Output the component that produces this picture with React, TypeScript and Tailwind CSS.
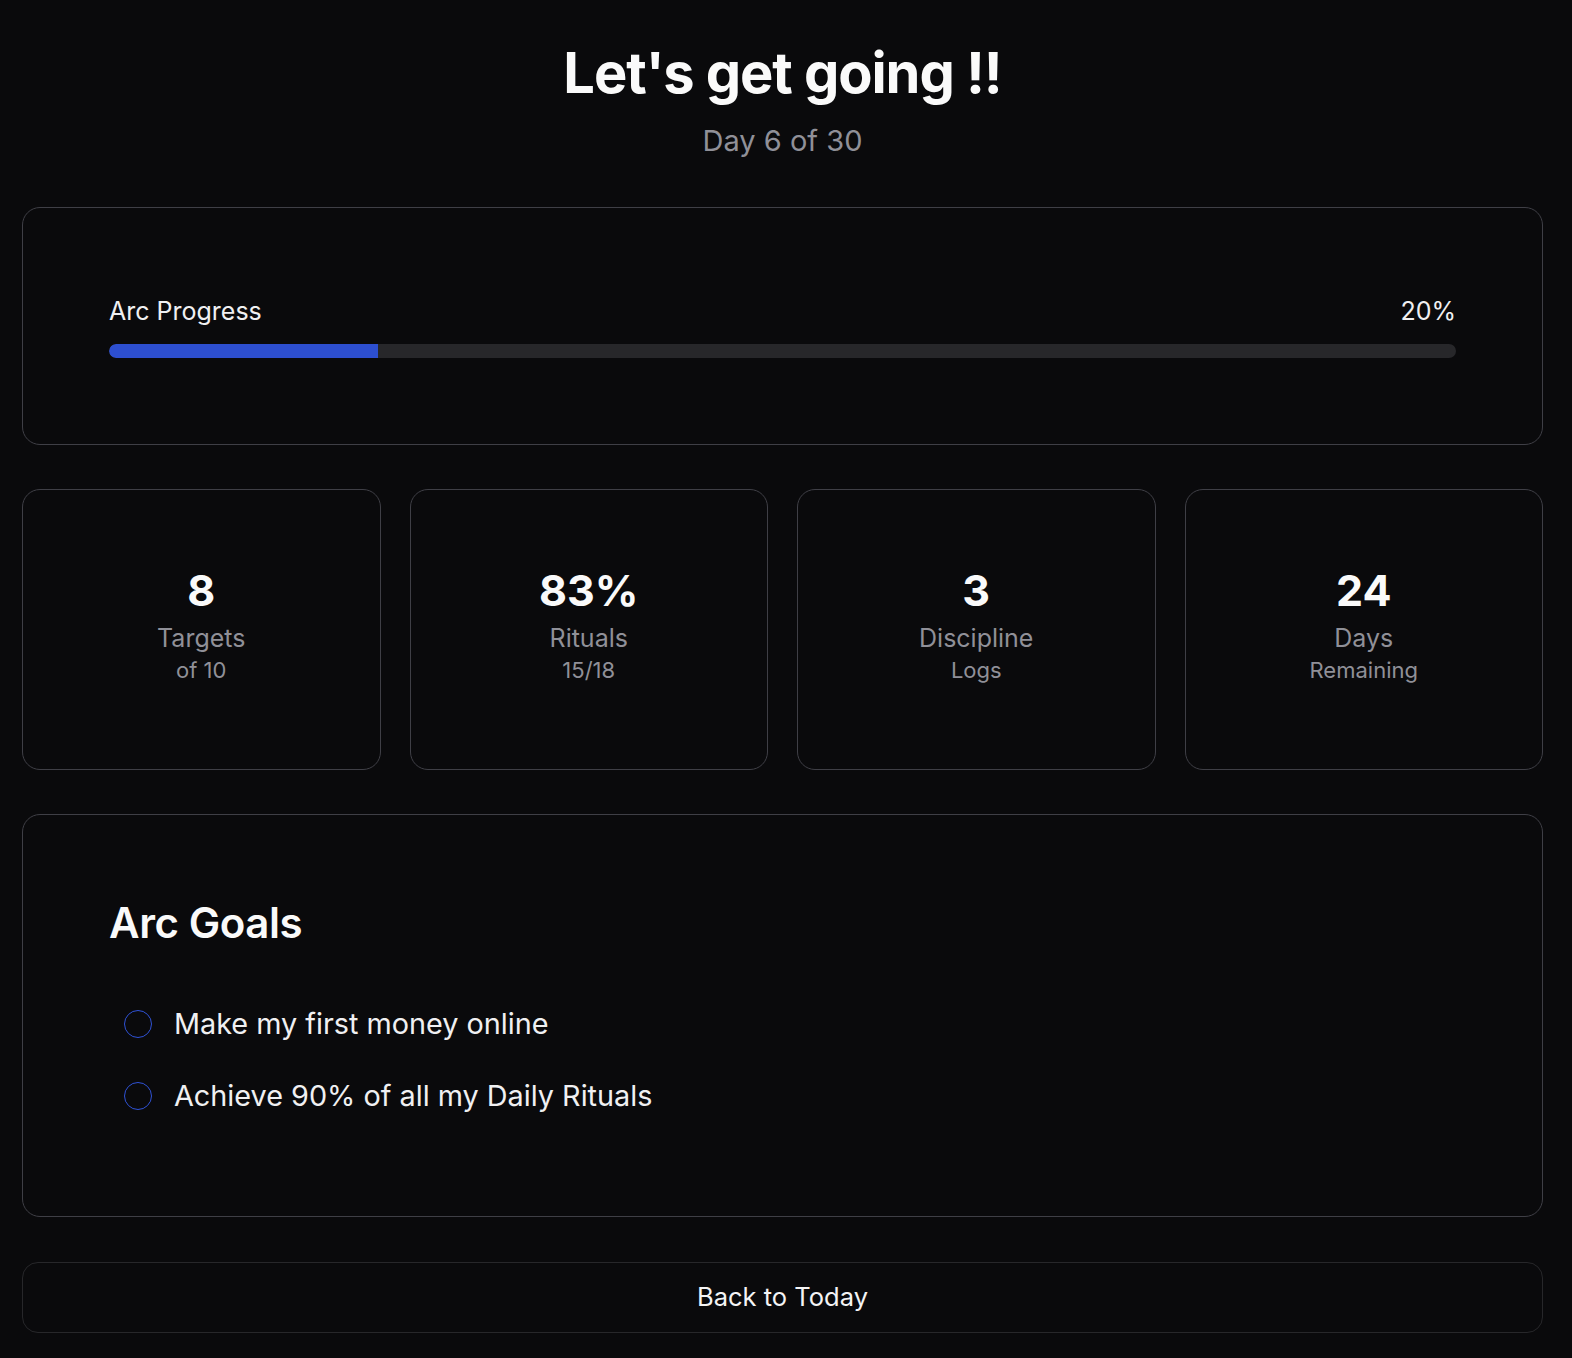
import React from "react";

const stats = [
  { value: "8", label: "Targets", sub: "of 10" },
  { value: "83%", label: "Rituals", sub: "15/18" },
  { value: "3", label: "Discipline", sub: "Logs" },
  { value: "24", label: "Days", sub: "Remaining" },
];

const goals = ["Make my first money online", "Achieve 90% of all my Daily Rituals"];

export default function App() {
  return (
    <div
      className="min-h-[1358px] w-full bg-[#0a0a0c] text-[#fafafa]"
      style={{ fontFamily: "Inter, 'Noto Sans', sans-serif" }}
    >
      <div className="ml-[22px] w-[1521px] pt-[40px] pb-[26px]">
        <header className="flex flex-col items-center">
          <h1 className="text-[56px] leading-[67px] font-bold tracking-[-0.019em]">Let's get going !!</h1>
          <p className="mt-[13px] text-[29px] leading-[42px] text-[#909098]">Day 6 of 30</p>
        </header>

        <section className="mt-[45px] rounded-[18px] border border-[#3f3f46] px-[86px] pt-[85px] pb-[86px]">
          <div className="flex items-center justify-between text-[25px] leading-[36px] text-[#f0f0f2]">
            <span>Arc Progress</span>
            <span>20%</span>
          </div>
          <div className="mt-[15px] h-[14px] w-full overflow-hidden rounded-full bg-[#27272a]">
            <div className="h-full w-[20%] rounded-l-full bg-[#2d4fd0]" />
          </div>
        </section>

        <section className="mt-[44px] grid grid-cols-4 gap-[29px]">
          {stats.map((s) => (
            <div
              key={s.label}
              className="flex h-[281px] flex-col items-center rounded-[18px] border border-[#3f3f46] pt-[75px]"
            >
              <div className="text-[43px] leading-[50px] font-bold">{s.value}</div>
              <div className="mt-[7px] text-[25px] leading-[32px] text-[#909098]">{s.label}</div>
              <div className="text-[22px] leading-[32px] text-[#909098]">{s.sub}</div>
            </div>
          ))}
        </section>

        <section className="mt-[44px] rounded-[18px] border border-[#3f3f46] px-[86px] pt-[83px] pb-[98px]">
          <h2 className="text-[42px] leading-[50px] font-semibold tracking-[-0.01em]">Arc Goals</h2>
          <ul className="mt-[54px] flex flex-col gap-[28px]">
            {goals.map((g) => (
              <li key={g} className="flex h-[44px] items-center gap-[22px] pl-[15px]">
                <span className="h-[28px] w-[28px] shrink-0 rounded-full border-[1.5px] border-[#2f52d6]" />
                <span className="text-[28.8px] leading-[44px] text-[#f0f0f2]">{g}</span>
              </li>
            ))}
          </ul>
        </section>

        <button className="mt-[45px] flex h-[71px] w-full items-center justify-center rounded-[16px] border border-[#27272a] text-[25.5px] text-[#f4f4f5]">
          Back to Today
        </button>
      </div>
    </div>
  );
}
